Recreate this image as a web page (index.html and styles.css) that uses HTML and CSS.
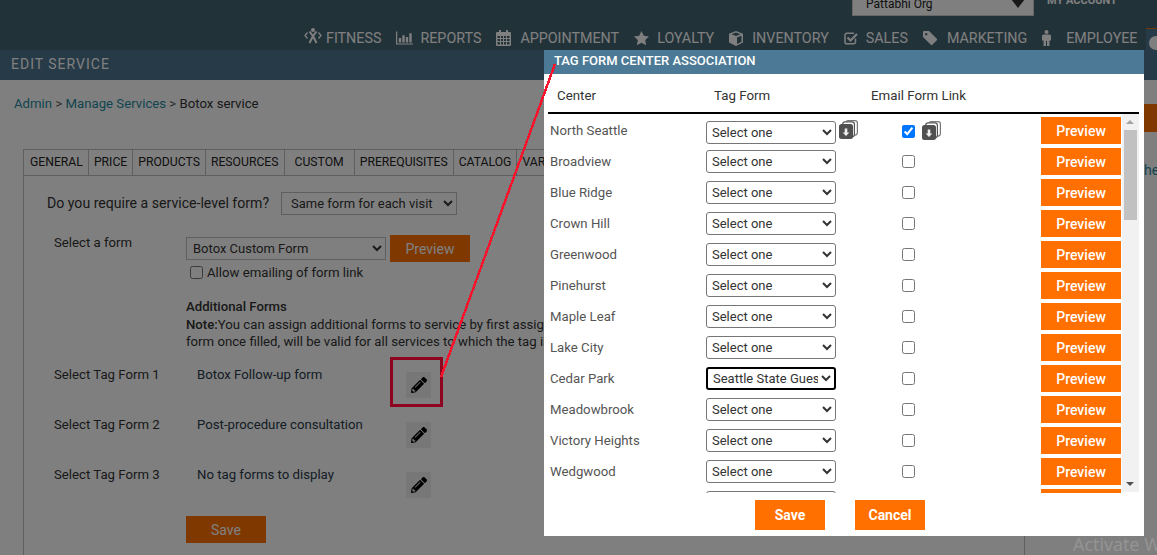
FILE: index.html
```html
<!DOCTYPE html>
<html lang="en">
<head>
<meta charset="utf-8">
<title>Edit Service</title>
<link rel="stylesheet" href="styles.css">
</head>
<body>
<svg width="0" height="0" class="defs">
  <symbol id="pencil" viewBox="0 0 512 512"><path d="M497.9 142.1l-46.1 46.1c-4.7 4.7-12.3 4.7-17 0l-111-111c-4.7-4.7-4.7-12.3 0-17l46.1-46.1c18.7-18.7 49.1-18.7 67.9 0l60.1 60.1c18.8 18.7 18.8 49.1 0 67.9zM284.2 99.8L21.6 362.4.4 483.9c-2.9 16.4 11.4 30.6 27.8 27.8l121.5-21.3 262.6-262.6c4.7-4.7 4.7-12.3 0-17l-111-111c-4.8-4.7-12.4-4.7-17.1 0zM124.1 339.9c-5.5-5.5-5.5-14.3 0-19.8l154-154c5.5-5.5 14.3-5.5 19.8 0s5.5 14.3 0 19.8l-154 154c-5.5 5.5-14.3 5.5-19.8 0zM88 424h48v36.3l-64.5 11.3-31.1-31.1L51.7 376H88v48z"/></symbol>
  <symbol id="docs" viewBox="0 0 19 19"><rect x="6.600" y=".6" width="11.800" height="14.500" rx="2.500" fill="#fff" stroke="#777" stroke-width="1.200"/><rect x="3.600" y="1.800" width="11.800" height="15" rx="2.500" fill="#fff" stroke="#555" stroke-width="1.200"/><rect x="0" y="4" width="14" height="15" rx="2.500" fill="#505050"/><path d="M5.700 8.500h2.600v4h2l-3.300 3.500-3.300-3.500h2z" fill="#eee"/></symbol>
</svg>
<div class="page">
  <header class="topbar">
    <div class="account-row">
      <div class="org-select"><span>Pattabhi Org</span><i class="org-arrow"></i></div>
      <strong class="account">MY ACCOUNT</strong>
    </div>
    <nav class="nav">
      <a class="nav-item"><svg class="ico ico-fit" viewBox="0 0 18 16"><g fill="none" stroke="#fff" stroke-width="2"><path d="M5.500 3.500l3.500 4.500 3.500-4.500M9 8L5.500 15M9 8l3.500 7"/><path d="M3.500 4.500L1 7.500l2.500 3M14.500 4.500L17 7.500l-2.500 3" stroke-width="1.300"/></g><circle cx="9" cy="2" r="2" fill="#fff"/></svg>FITNESS</a>
      <a class="nav-item"><svg class="ico ico-wide" viewBox="0 0 18 14"><path fill="#fff" d="M0 0h1.300v12.700H18V14H0zM3 7h2.500v4.700H3zM6.700 4h2.500v7.700H6.700zM10.400 6h2.500v5.700h-2.500zM14.100 2h2.500v9.700h-2.500z"/></svg>REPORTS</a>
      <a class="nav-item"><svg class="ico ico-cal" viewBox="0 0 15 16"><path fill="#fff" fill-rule="evenodd" d="M1 2h2V0h2v2h5V0h2v2h2a1 1 0 0 1 1 1v12a1 1 0 0 1-1 1H1a1 1 0 0 1-1-1V3a1 1 0 0 1 1-1zM1.500 6v2h2.500V6zm3.500 0v2h2V6zm3 0v2h2V6zm3 0v2h2.500V6zM1.500 9v2h2.500V9zm3.500 0v2h2V9zm3 0v2h2V9zm3 0v2h2.500V9zM1.500 12v2.500h2.500V12zm3.500 0v2.500h2V12zm3 0v2.500h2V12zm3 0v2.500h2.500V12z"/></svg>APPOINTMENT</a>
      <a class="nav-item"><svg class="ico ico-star" viewBox="0 0 15 14"><path fill="#fff" d="M7.500 0l2.300 4.800 5.200.7-3.800 3.600.9 5.200-4.600-2.500-4.600 2.500.9-5.200L0 5.500l5.200-.7z"/></svg>LOYALTY</a>
      <a class="nav-item"><svg class="ico ico-cube" viewBox="0 0 14 15"><path fill="#fff" d="M7 0l7 2.800v8.700L7 15l-7-3.500V2.800zM7 1.500L2.500 3.300 7 5.100l4.500-1.800zM8 6.500v6.600l4.500-2.300V4.700z"/></svg>INVENTORY</a>
      <a class="nav-item"><svg class="ico ico-check" viewBox="0 0 14 14"><path fill="none" stroke="#fff" stroke-width="1.500" d="M11.500 7.500V11a1.800 1.800 0 0 1-1.800 1.800H2.800A1.800 1.800 0 0 1 1 11V4a1.800 1.800 0 0 1 1.800-1.800H10"/><path fill="none" stroke="#fff" stroke-width="2.200" d="M3.500 6.500L6.500 9.500 13 3"/></svg>SALES</a>
      <a class="nav-item"><svg class="ico ico-tag" viewBox="0 0 14 14"><path fill="#fff" fill-rule="evenodd" d="M0 1a1 1 0 0 1 1-1h5l7.600 7.600a1.400 1.400 0 0 1 0 2l-4 4a1.400 1.400 0 0 1-2 0L0 6zM3.200 2a1.200 1.200 0 1 0 .01 0z"/></svg>MARKETING</a>
      <a class="nav-item"><svg class="ico ico-male" viewBox="0 0 9 16"><circle cx="4.500" cy="2" r="2" fill="#fff"/><path fill="#fff" d="M1.500 4.500h6A1.500 1.500 0 0 1 9 6v4.500H7.500V16H5V11H4v5H1.500V10.500H0V6a1.500 1.500 0 0 1 1.500-1.500z"/></svg>EMPLOYEE</a>
      <a class="nav-item nav-active"><svg class="ico ico-pal" viewBox="0 0 14 14"><path fill="#fff" d="M7 0a7 7 0 1 0 0 14c2 0 1-2 2-3s4 0 5-3a7 7 0 0 0-7-8z"/></svg></a>
    </nav>
  </header>
  <div class="subbar">EDIT SERVICE</div>

  <main class="main">
    <section class="content">
      <p class="crumbs"><a>Admin</a> &gt; <a>Manage Services</a> &gt; <span>Botox service</span></p>
      <div class="panel">
        <div class="tabs">
          <span class="tab">GENERAL</span><span class="tab">PRICE</span><span class="tab">PRODUCTS</span><span class="tab">RESOURCES</span><span class="tab tab-active">CUSTOM</span><span class="tab">PREREQUISITES</span><span class="tab">CATALOG</span><span class="tab">VARIATIONS</span>
        </div>
        <div class="question">
          <label class="q-label">Do you require a service-level form?</label>
          <select class="q-select"><option>Same form for each visit</option></select>
        </div>
        <div class="form-row">
          <label class="form-label">Select a form</label>
          <div class="form-field">
            <div class="form-pick">
              <select class="form-select"><option>Botox Custom Form</option></select>
              <button class="btn btn-form">Preview</button>
            </div>
            <label class="allow"><input type="checkbox">Allow emailing of form link</label>
          </div>
        </div>
        <div class="additional">
          <h4 class="add-title">Additional Forms</h4>
          <p class="add-note"><b>Note:</b>You can assign additional forms to service by first assigning a tag to the service. A tag<br>form once filled, will be valid for all services to which the tag is assigned to the client.</p>
        </div>
        <div class="tag-row"><span class="tag-label">Select Tag Form 1</span><span class="tag-value">Botox Follow-up form</span><button class="edit"><svg class="pencil"><use href="#pencil"/></svg></button></div>
        <div class="tag-row"><span class="tag-label">Select Tag Form 2</span><span class="tag-value">Post-procedure consultation</span><button class="edit"><svg class="pencil"><use href="#pencil"/></svg></button></div>
        <div class="tag-row"><span class="tag-label">Select Tag Form 3</span><span class="tag-value">No tag forms to display</span><button class="edit"><svg class="pencil"><use href="#pencil"/></svg></button></div>
        <button class="btn btn-save">Save</button>
      </div>
    </section>
    <aside class="aside">
      <div class="aside-block"></div>
      <a class="aside-link">he</a>
    </aside>
  </main>

  <div class="overlay"></div>

  <div class="modal">
    <h3 class="modal-title">TAG FORM CENTER ASSOCIATION</h3>
    <div class="col-head"><span>Center</span><span>Tag Form</span><span>Email Form Link</span></div>
    <div class="scroller">
      <div class="rows">
        <div class="row row-first"><span class="center">North Seattle</span><div class="cell-tag"><select class="sel"><option>Select one</option></select><svg class="docs"><use href="#docs"/></svg></div><div class="cell-mail"><input type="checkbox" checked><svg class="docs"><use href="#docs"/></svg></div><button class="btn btn-row">Preview</button></div>
        <div class="row"><span class="center">Broadview</span><div class="cell-tag"><select class="sel"><option>Select one</option></select></div><div class="cell-mail"><input type="checkbox"></div><button class="btn btn-row">Preview</button></div>
        <div class="row"><span class="center">Blue Ridge</span><div class="cell-tag"><select class="sel"><option>Select one</option></select></div><div class="cell-mail"><input type="checkbox"></div><button class="btn btn-row">Preview</button></div>
        <div class="row"><span class="center">Crown Hill</span><div class="cell-tag"><select class="sel"><option>Select one</option></select></div><div class="cell-mail"><input type="checkbox"></div><button class="btn btn-row">Preview</button></div>
        <div class="row"><span class="center">Greenwood</span><div class="cell-tag"><select class="sel"><option>Select one</option></select></div><div class="cell-mail"><input type="checkbox"></div><button class="btn btn-row">Preview</button></div>
        <div class="row"><span class="center">Pinehurst</span><div class="cell-tag"><select class="sel"><option>Select one</option></select></div><div class="cell-mail"><input type="checkbox"></div><button class="btn btn-row">Preview</button></div>
        <div class="row"><span class="center">Maple Leaf</span><div class="cell-tag"><select class="sel"><option>Select one</option></select></div><div class="cell-mail"><input type="checkbox"></div><button class="btn btn-row">Preview</button></div>
        <div class="row"><span class="center">Lake City</span><div class="cell-tag"><select class="sel"><option>Select one</option></select></div><div class="cell-mail"><input type="checkbox"></div><button class="btn btn-row">Preview</button></div>
        <div class="row"><span class="center">Cedar Park</span><div class="cell-tag"><select class="sel sel-focus"><option>Seattle State Guest Form</option></select></div><div class="cell-mail"><input type="checkbox"></div><button class="btn btn-row">Preview</button></div>
        <div class="row"><span class="center">Meadowbrook</span><div class="cell-tag"><select class="sel"><option>Select one</option></select></div><div class="cell-mail"><input type="checkbox"></div><button class="btn btn-row">Preview</button></div>
        <div class="row"><span class="center">Victory Heights</span><div class="cell-tag"><select class="sel"><option>Select one</option></select></div><div class="cell-mail"><input type="checkbox"></div><button class="btn btn-row">Preview</button></div>
        <div class="row"><span class="center">Wedgwood</span><div class="cell-tag"><select class="sel"><option>Select one</option></select></div><div class="cell-mail"><input type="checkbox"></div><button class="btn btn-row">Preview</button></div>
        <div class="row row-clipped"><div class="cell-tag"><select class="sel"><option>Select one</option></select></div><div class="cell-mail"></div><button class="btn btn-row">Preview</button></div>
      </div>
      <div class="scrollbar"><i class="arrow-up"></i><div class="thumb"></div><i class="arrow-down"></i></div>
    </div>
    <div class="modal-foot"><button class="btn btn-foot">Save</button><button class="btn btn-foot">Cancel</button></div>
  </div>

  <div class="redbox"></div>
  <svg class="callout" viewBox="0 0 1157 555"><path d="M555 64L441 377"/></svg>
  <div class="watermark">Activate W</div>
</div>
</body>
</html>
```

FILE: styles.css
```css
* { box-sizing: border-box; }
html, body { margin: 0; padding: 0; background: #fff; }
body { font-family: Roboto, "Liberation Sans", sans-serif; color: #333; }
.defs { position: absolute; }
.page { position: relative; width: 1157px; height: 555px; overflow: hidden; background: #fff; }

/* top bar */
.topbar { height: 50px; background: #446472; overflow: hidden; }
.account-row { height: 16px; display: flex; align-items: flex-end; padding-left: 852px; }
.org-select { width: 182px; height: 24px; margin-top: -8px; flex: none; background: #fff; border: 1px solid #ccc; display: flex; align-items: center; justify-content: space-between; padding: 0 8px 1px 13px; font-size: 12px; color: #222; }
.org-arrow { width: 0; height: 0; border-left: 7px solid transparent; border-right: 7px solid transparent; border-top: 9px solid #333; align-self: flex-end; margin-bottom: 6px; }
.account { margin-left: 13px; font-size: 11px; font-weight: 700; color: #fff; line-height: 12px; align-self: flex-start; margin-top: -5px; }
.nav { display: flex; padding-left: 304px; height: 34px; align-items: center; white-space: nowrap; margin-top: 5px; }
.nav-item { display: flex; align-items: center; color: #fff; font-size: 14.300px; flex: none; margin-right: 15px; }
.ico { flex: none; display: block; }
.ico-fit { width: 18px; height: 16px; margin-right: 4px; margin-top: -5px; }
.ico-wide { width: 17px; height: 14px; margin-right: 7px; }
.ico-cal { width: 15px; height: 16px; margin-right: 9px; }
.ico-star { width: 15px; height: 14px; margin-right: 8px; }
.ico-cube { width: 14px; height: 15px; margin-right: 9px; }
.ico-check { width: 14px; height: 14px; margin-right: 8px; }
.ico-tag { width: 14px; height: 14px; margin-right: 10px; }
.ico-male { width: 9px; height: 16px; margin-right: 15px; }
.nav-active { background: #4c748e; border-top: 1px solid #e0701a; height: 29px; margin: 0 0 -8px -6px; padding: 0 6px 0 3px; }
.ico-pal { width: 14px; height: 14px; }
.subbar { height: 30px; background: #4c748e; color: #fff; font-size: 14px; padding: 0 11px 2px; display: flex; align-items: center; letter-spacing: 1px; }

/* page body */
.main { display: flex; height: 475px; }
.content { width: 1025px; flex: none; padding: 16px 0 0 14px; }
.crumbs { margin: 0 0 38px; font-size: 13.200px; line-height: 15px; color: #555; }
.crumbs a { color: #1f8a9e; }
.crumbs span { color: #333; }
.panel { margin-left: 9px; height: 420px; border-left: 1px solid #bfbfbf; border-right: 1px solid #bfbfbf; }
.tabs { display: flex; height: 27px; border-bottom: 1px solid #bfbfbf; white-space: nowrap; overflow: hidden; }
.tab { flex: none; padding: 0 5px; border: 1px solid #bfbfbf; border-left: 0; height: 27px; line-height: 25px; font-size: 12.200px; color: #222; }
.tab:first-child { padding-left: 6px; }
.tab-active { padding: 0 10px; border-bottom-color: #fff; }
.question { display: flex; align-items: center; padding: 15px 0 0 23px; height: 39px; }
.q-label { font-size: 14.100px; width: 234px; color: #333; flex: none; }
.q-select { width: 176px; height: 23px; font: 13px Roboto, sans-serif; color: #333; border: 1px solid #bfbfbf; background: #fff; padding-left: 5px; }
.form-row { display: flex; margin-top: 20px; padding-left: 30px; }
.form-label { width: 132px; flex: none; font-size: 13.200px; line-height: 15px; color: #333; }
.form-pick { display: flex; align-items: center; gap: 4px; height: 27px; }
.form-select { width: 200px; height: 23px; font: 13px Roboto, sans-serif; color: #333; border: 1px solid #bfbfbf; background: #fff; padding-left: 2px; }
.btn { border: 0; background: #ff7000; color: #fff; font-family: Roboto, sans-serif; cursor: pointer; padding: 0; }
.btn-form { width: 80px; height: 27px; font-size: 14px; }
.allow { display: flex; align-items: center; font-size: 13.200px; line-height: 15px; margin-top: 3px; color: #333; }
.allow input { margin: 0 4px 0 4px; width: 13px; height: 13px; }
.additional { padding-left: 162px; margin-top: 18px; font-size: 13.200px; line-height: 17px; white-space: nowrap; }
.add-title { margin: 0; font-size: 13.200px; font-weight: 500; line-height: 18px; }
.add-note { margin: 0; }
.add-note b { font-weight: 500; }
.tag-row { display: flex; height: 50px; padding-left: 30px; font-size: 13.200px; line-height: 15px; color: #333; }
.tag-label { width: 143px; flex: none; margin-top: 4px; }
.tag-value { width: 209px; flex: none; margin-top: 4px; color: #2a3a4a; }
.additional + .tag-row { margin-top: 13px; }
.edit { width: 25px; height: 26px; margin-top: 9px; border: 0; padding: 0; background: #eee; display: flex; align-items: center; justify-content: center; }
.pencil { width: 16px; height: 16px; fill: #000; display: block; }
.btn-save { display: block; width: 80px; height: 27px; font-size: 14px; margin: 3px 0 0 162px; }
.aside { flex: 1; padding-left: 119px; padding-top: 24px; overflow: hidden; }
.aside-block { height: 28px; background: #ff7000; }
.aside-link { display: block; margin-top: 30px; font-size: 14px; color: #1f8a9e; line-height: 16px; }

/* overlay and dialog */
.overlay { position: absolute; inset: 0; background: rgba(0, 0, 0, .5); }
.modal { position: absolute; left: 544px; top: 50px; width: 600px; height: 486px; background: #fff; display: flex; flex-direction: column; }
.modal-title { margin: 0; height: 24px; background: #4c7a96; color: #fff; font-size: 13px; font-weight: 500; line-height: 22px; padding-left: 10px; flex: none; }
.col-head { flex: none; height: 40px; margin: 0 5px 0 4px; padding: 12px 0 0 9px; border-bottom: 2px solid #000; display: grid; grid-template-columns: 157px 157px 1fr; font-size: 13.300px; line-height: 20px; color: #333; }
.scroller { flex: none; height: 379px; display: flex; overflow: hidden; }
.rows { width: 578px; flex: none; padding: 3px 0 0 6px; overflow: hidden; }
.row { display: grid; grid-template-columns: 156px 196px 139px 80px; height: 31px; align-items: start; font-size: 13.200px; color: #333; }
.row-clipped { grid-template-columns: 196px 139px 80px; padding-left: 156px; }
.center { line-height: 15px; margin-top: 6px; color: #555; }
.cell-tag { display: flex; align-items: flex-start; }
.sel { width: 130px; height: 23px; margin-top: 2px; font: 13px Roboto, sans-serif; color: #333; border: 1px solid #767676; border-radius: 3px; background: #fff; padding-left: 1px; }
.row-first .sel { margin-top: 4px; }
.sel-focus { border: 2px solid #000; }
.docs { width: 19px; height: 19px; margin: 3px 0 0 3px; flex: none; display: block; }
.cell-mail { display: flex; align-items: flex-start; padding-top: 7px; }
.row-first .cell-mail { padding-top: 8px; }
.cell-mail input { margin: 0; width: 13px; height: 13px; }
.cell-mail .docs { margin: -4px 0 0 7px; }
.btn-row { width: 80px; height: 27px; font-size: 14px; font-weight: 500; }
.scrollbar { width: 17px; flex: none; background: #f1f1f1; position: relative; height: 378px; }
.thumb { margin: 16px 2px 0; height: 90px; background: #c1c1c1; }
.arrow-up, .arrow-down { position: absolute; left: 4px; width: 0; height: 0; border-left: 4px solid transparent; border-right: 4px solid transparent; }
.arrow-up { top: 6px; border-bottom: 4px solid #a3a3a3; }
.arrow-down { bottom: 6px; border-top: 4px solid #505050; }
.modal-foot { flex: 1; display: flex; gap: 30px; padding: 7px 0 0 211px; }
.btn-foot { width: 70px; height: 30px; font-size: 14px; font-weight: 700; }

/* annotations */
.redbox { position: absolute; left: 390px; top: 357px; width: 53px; height: 50px; border: 3px solid #8e0320; }
.callout { position: absolute; left: 0; top: 0; width: 1157px; height: 555px; pointer-events: none; }
.callout path { fill: none; stroke: #f5162d; stroke-width: 2.500; shape-rendering: crispEdges; }
.watermark { position: absolute; left: 1073px; top: 532px; font: 18px "Open Sans", sans-serif; color: #959595; white-space: nowrap; line-height: 24px; }
```
